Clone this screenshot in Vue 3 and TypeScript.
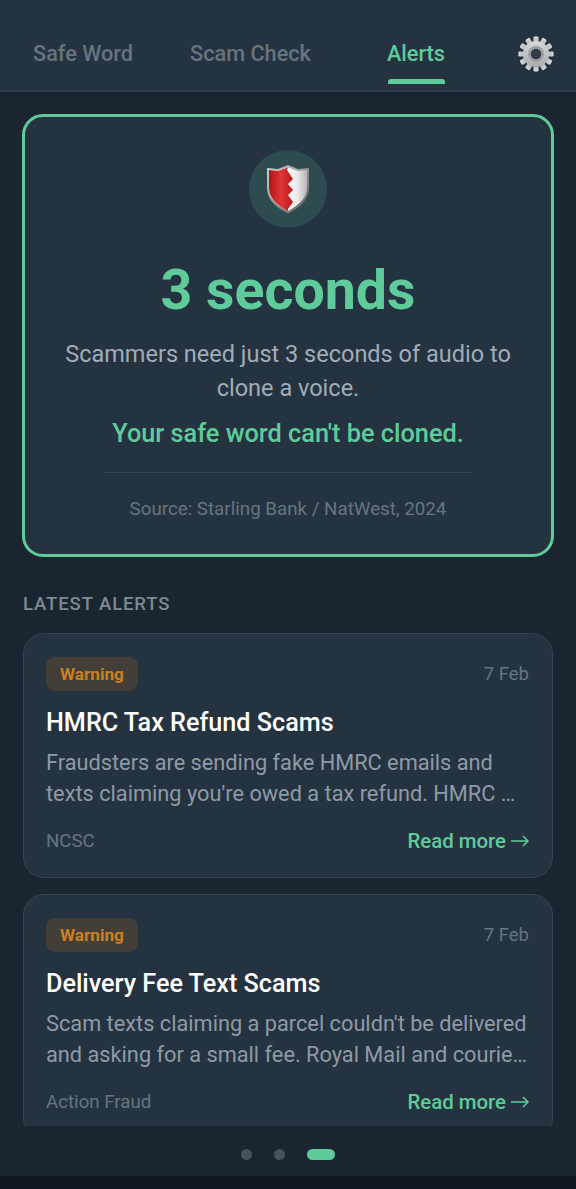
<script setup lang="ts">
const tabs = [
  { label: 'Safe Word', active: false },
  { label: 'Scam Check', active: false },
  { label: 'Alerts', active: true },
]
const alerts = [
  { level: 'Warning', date: '7 Feb', title: 'HMRC Tax Refund Scams', excerpt: "Fraudsters are sending fake HMRC emails and texts claiming you're owed a tax refund. HMRC …", source: 'NCSC' },
  { level: 'Warning', date: '7 Feb', title: 'Delivery Fee Text Scams', excerpt: "Scam texts claiming a parcel couldn't be delivered and asking for a small fee. Royal Mail and courie…", source: 'Action Fraud' },
]
const teeth = Array.from({ length: 12 }, (_, i) => i * 30)
</script>

<template>
  <div class="page">
    <header class="top">
      <nav class="tabs">
        <div v-for="t in tabs" :key="t.label" class="tab" :class="{ active: t.active }">{{ t.label }}</div>
      </nav>
      <svg class="gear" viewBox="0 0 36 36" width="36" height="36" aria-label="Settings">
        <defs>
          <linearGradient id="gearFill" x1="0" y1="0" x2="0" y2="1">
            <stop offset="0" stop-color="#d6d9da" />
            <stop offset="1" stop-color="#a9adb0" />
          </linearGradient>
        </defs>
        <rect v-for="a in teeth" :key="a" x="15.4" y="0.4" width="5.2" height="8" rx="1.3" fill="url(#gearFill)" :transform="`rotate(${a} 18 18)`" />
        <circle cx="18" cy="18" r="13" fill="url(#gearFill)" />
        <circle cx="18" cy="18" r="8" fill="#9a9ea2" />
        <circle cx="18" cy="18" r="5.2" fill="#2f3b47" />
      </svg>
    </header>

    <main class="main">
      <section class="hero">
        <div class="badge">
          <svg viewBox="0 0 44 50" width="44" height="50">
            <defs>
              <linearGradient id="red" x1="0" y1="0" x2="1" y2="0">
                <stop offset="0" stop-color="#b01416" />
                <stop offset="0.5" stop-color="#e23536" />
                <stop offset="1" stop-color="#b8191b" />
              </linearGradient>
              <linearGradient id="silver" x1="0" y1="0" x2="1" y2="0">
                <stop offset="0.45" stop-color="#ffffff" />
                <stop offset="0.75" stop-color="#e9e9e9" />
                <stop offset="1" stop-color="#b5b7b8" />
              </linearGradient>
              <linearGradient id="rim" x1="0" y1="0" x2="1" y2="1">
                <stop offset="0" stop-color="#cfd0d1" />
                <stop offset="1" stop-color="#5f5a5a" />
              </linearGradient>
            </defs>
            <path d="M22 1 L32 5 L43 4 L43 24 C43 36 33 44 22 49.5 C11 44 1 36 1 24 L1 4 L12 5 Z" fill="url(#rim)" />
            <path d="M22 3.5 L32 7 L41 6 L41 24 C41 34.5 31.5 42 22 47 C12.5 42 3 34.5 3 24 L3 6 L12 7 Z" fill="url(#silver)" />
            <path d="M22 3.5 L12 7 L3 6 L3 24 C3 34.5 12.5 42 22 47 L22 45 L27 38 L22 31 L27 26 L22 20 L27 15 L21 6 Z" fill="url(#red)" />
          </svg>
        </div>
        <h1 class="big">3 seconds</h1>
        <p class="lead">Scammers need just 3 seconds of audio to clone a voice.</p>
        <p class="safe">Your safe word can't be cloned.</p>
        <div class="source">Source: Starling Bank / NatWest, 2024</div>
      </section>

      <h2 class="label">LATEST ALERTS</h2>

      <article v-for="a in alerts" :key="a.title" class="card">
        <div class="row">
          <span class="pill">{{ a.level }}</span>
          <span class="date">{{ a.date }}</span>
        </div>
        <h3 class="title">{{ a.title }}</h3>
        <p class="body">{{ a.excerpt }}</p>
        <div class="row foot">
          <span class="src">{{ a.source }}</span>
          <span class="more">
            Read more
            <svg class="arrow" viewBox="0 0 18 12" width="18" height="12" fill="none" stroke="currentColor" stroke-width="1.5">
              <path d="M0 6 H17 M12 1 L17 6 L12 11" />
            </svg>
          </span>
        </div>
      </article>
    </main>

    <div class="dots">
      <span class="dot"></span>
      <span class="dot"></span>
      <span class="dot on"></span>
    </div>
    <div class="base"></div>
  </div>
</template>

<style>
html, body { margin: 0; background: #0f161d; }
</style>

<style scoped>
.page {
  width: 576px;
  height: 1189px;
  display: flex;
  flex-direction: column;
  background: #1b2530;
  font-family: Roboto, "Noto Sans", sans-serif;
  overflow: hidden;
}
.top {
  flex: none;
  height: 92px;
  box-sizing: border-box;
  background: #253341;
  border-bottom: 2px solid #2f3d4a;
  display: flex;
  position: relative;
}
.tabs {
  flex: 1;
  display: flex;
  height: 90px;
}
.tab {
  position: relative;
  flex: none;
  padding-top: 41px;
  font-size: 21.7px;
  line-height: 26px;
  font-weight: 500;
  color: #677480;
  text-align: center;
  white-space: nowrap;
}
.tab:nth-child(1) { margin-left: 33px; }
.tab:nth-child(2) { margin-left: 57px; }
.tab:nth-child(3) { margin-left: 76px; }
.tab.active { color: #5fcb9a; }
.tab.active::after {
  content: "";
  position: absolute;
  left: 1px;
  right: 0;
  bottom: 6px;
  height: 5px;
  border-radius: 3px 3px 0 0;
  background: #5fcb9a;
}
.gear {
  position: absolute;
  left: 518px;
  top: 36px;
}
.main {
  flex: 1;
  min-height: 0;
  overflow: hidden;
  padding: 22px 22px 0;
}
.hero {
  box-sizing: border-box;
  height: 443px;
  background: #253341;
  border: 3px solid #5fcb9a;
  border-radius: 21px;
  padding: 33px 33px 0;
  display: flex;
  flex-direction: column;
  align-items: center;
}
.badge {
  width: 78px;
  height: 78px;
  border-radius: 50%;
  background: #2e4b50;
  display: flex;
  align-items: center;
  justify-content: center;
}
.big {
  margin: 31px 0 0;
  font-size: 55.5px;
  line-height: 64px;
  font-weight: 700;
  color: #5fcb9a;
}
.lead {
  margin: 14px 0 0;
  font-size: 23.5px;
  line-height: 34px;
  color: #a0acb8;
  text-align: center;
}
.safe {
  margin: 12px 0 0;
  font-size: 25.3px;
  line-height: 34px;
  font-weight: 500;
  color: #5fcb9a;
}
.source {
  align-self: stretch;
  margin: 21px 46px 0;
  padding-top: 24px;
  border-top: 1px solid #35434f;
  font-size: 18.75px;
  line-height: 24px;
  color: #677480;
  text-align: center;
  white-space: nowrap;
}
.label {
  margin: 36px 1px 18px;
  font-size: 18.5px;
  line-height: 22px;
  font-weight: 500;
  letter-spacing: 0.9px;
  color: #7d8995;
}
.card {
  box-sizing: border-box;
  height: 245px;
  margin: 0 1px 16px;
  padding: 23px 23px 0 22px;
  background: #253341;
  border: 1px solid #35434f;
  border-radius: 21px;
}
.row {
  display: flex;
  align-items: center;
  justify-content: space-between;
}
.pill {
  height: 34px;
  line-height: 34px;
  padding: 0 14px;
  border-radius: 9px;
  background: #433f38;
  color: #cb7e20;
  font-size: 17.2px;
  font-weight: 700;
}
.date {
  font-size: 18.5px;
  color: #677480;
}
.title {
  margin: 14px 0 0;
  font-size: 25.2px;
  line-height: 36px;
  font-weight: 500;
  color: #ffffff;
}
.body {
  margin: 6px 0 0;
  font-size: 21.75px;
  line-height: 31px;
  color: #8e9aa6;
}
.foot {
  margin-top: 20px;
}
.src {
  font-size: 18.7px;
  color: #677480;
}
.more {
  display: flex;
  align-items: center;
  gap: 5px;
  font-size: 20.4px;
  font-weight: 500;
  color: #5fcb9a;
}
.arrow {
  flex: none;
}
.dots {
  flex: none;
  height: 50px;
  box-sizing: border-box;
  padding-top: 6px;
  display: flex;
  align-items: center;
  justify-content: center;
  gap: 22px;
}
.dot {
  width: 11px;
  height: 11px;
  border-radius: 50%;
  background: #47515c;
}
.dot.on {
  width: 28px;
  border-radius: 6px;
  background: #5fcb9a;
}
.base {
  flex: none;
  height: 13px;
  background: #0f161d;
}
</style>
